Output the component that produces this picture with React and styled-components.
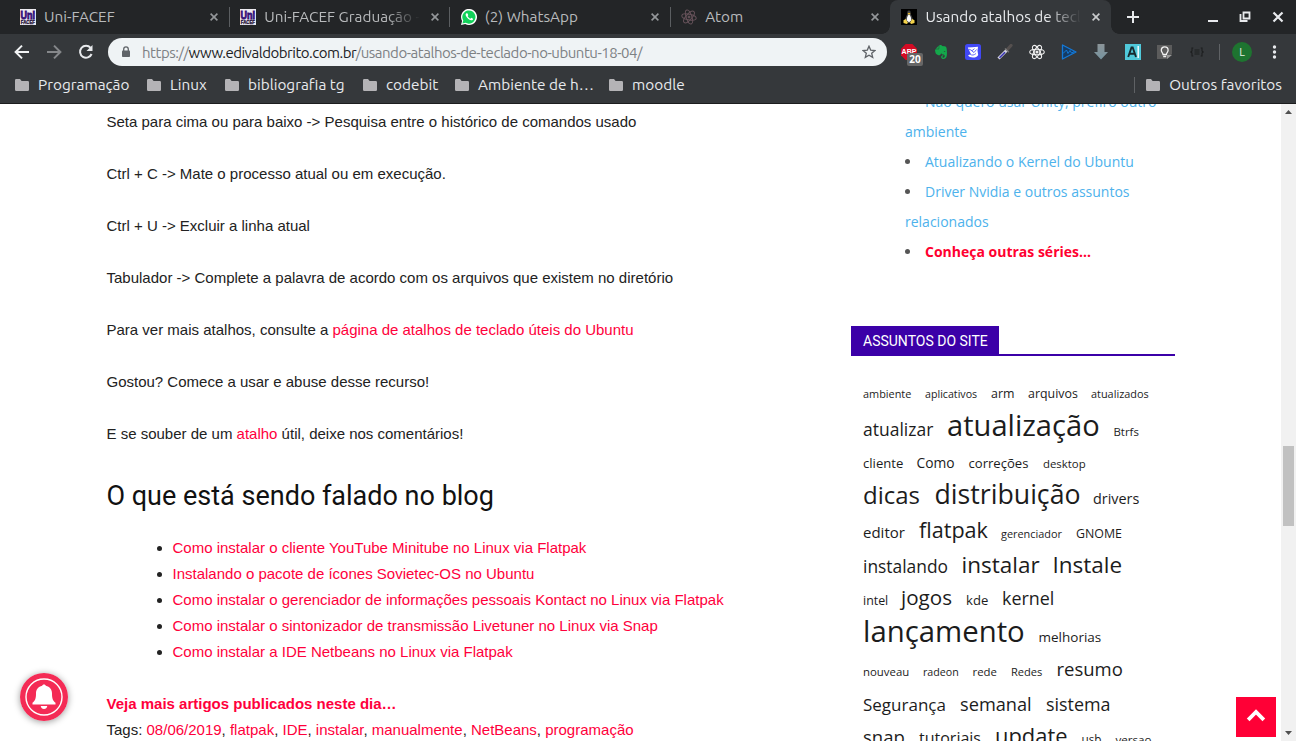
import React from 'react';
import styled, { createGlobalStyle, css } from 'styled-components';
import { FaEvernote } from 'react-icons/fa';

const Global = createGlobalStyle`
  * { box-sizing: border-box; }
  body { margin: 0; overflow: hidden; background: #fff; }
`;

const Screen = styled.div`
  display: flex;
  flex-direction: column;
  width: 1296px;
  height: 741px;
  overflow: hidden;
`;

/* ---------- browser frame ---------- */

const Frame = styled.header`
  flex: none;
  height: 104px;
  background: #35383b;
  border-bottom: 1px solid #1c1d1e;
  color: #e8eaed;
  font-family: Ubuntu, "Open Sans", "Noto Sans", sans-serif;
  font-size: 15.33px;
`;

const TabStrip = styled.div`
  display: flex;
  height: 34px;
  padding-left: 9px;
  background: #232527;
`;

const Tab = styled.div`
  position: relative;
  display: flex;
  align-items: center;
  width: 220.5px;
  height: 34px;
  padding: 0 11px;
  color: #b8babc;
  ${p => p.$divided && css`
    &::after {
      content: '';
      position: absolute;
      right: -0.5px;
      top: 7px;
      width: 1px;
      height: 20px;
      background: #5b5e61;
    }
  `}
  ${p => p.$active && css`
    background: #35383b;
    border-radius: 8px 8px 0 0;
    color: #e8eaed;
    &::before, &::after {
      content: '';
      position: absolute;
      bottom: 0;
      width: 8px;
      height: 8px;
    }
    &::before { left: -8px; background: radial-gradient(circle at 0 0, transparent 7.5px, #35383b 8px); }
    &::after { right: -8px; background: radial-gradient(circle at 100% 0, transparent 7.5px, #35383b 8px); }
  `}
`;

const Favicon = styled.span`
  display: flex;
  flex: none;
  width: 16px;
  height: 16px;
  margin-right: 8px;
`;

const TabTitle = styled.span`
  flex: 1;
  overflow: hidden;
  white-space: nowrap;
  line-height: 20px;
  mask-image: ${p => (p.$fade ? 'linear-gradient(90deg, #000 78%, transparent 100%)' : 'none')};
`;

const CloseButton = styled.span`
  display: flex;
  flex: none;
  margin-left: 11px;
`;

const WindowButtons = styled.div`
  display: flex;
  flex: 1;
  align-items: center;
  padding-left: 15px;
`;

const Toolbar = styled.div`
  display: flex;
  align-items: center;
  height: 36px;
  padding-left: 14px;
`;

const NavButton = styled.span`
  display: flex;
  width: 16px;
  margin-right: 16px;
`;

const Omnibox = styled.div`
  display: flex;
  align-items: center;
  width: 779px;
  height: 28px;
  margin-left: -2px;
  padding: 0 11px 0 13px;
  border-radius: 14px;
  background: #eff3f5;
  color: #7d8184;
`;

const Address = styled.span`
  flex: 1;
  margin-left: 11px;
  font-size: 15px;
  white-space: nowrap;
  letter-spacing: -0.475px;
  b { font-weight: 400; color: #202124; }
`;

const Extensions = styled.div`
  display: flex;
  align-items: center;
  gap: 16px;
  margin-left: 14px;
`;

const Extension = styled.span`
  position: relative;
  display: flex;
  width: 16px;
  height: 16px;
`;

const BadgeCount = styled.span`
  position: absolute;
  left: 6px;
  top: 9px;
  width: 16px;
  height: 13px;
  border-radius: 2px;
  background: #666;
  color: #fff;
  font: 700 10px/13px "Open Sans", sans-serif;
  text-align: center;
`;

const Divider = styled.span`
  width: 1px;
  height: 16px;
  background: #5f6265;
`;

const ToolbarDivider = styled(Divider)`
  margin-left: 14px;
`;

const Avatar = styled.span`
  width: 20px;
  height: 20px;
  margin-left: 12px;
  border-radius: 50%;
  background: #1e7430;
  color: #e6efe7;
  font-size: 11px;
  line-height: 20px;
  text-align: center;
`;

const Bookmarks = styled.div`
  display: flex;
  align-items: center;
  height: 33px;
  padding: 0 14px 3px 15px;
`;

const Bookmark = styled.span`
  display: flex;
  align-items: center;
  width: ${p => (p.$width ? `${p.$width}px` : 'auto')};
  line-height: 18px;
  white-space: nowrap;
  svg { flex: none; margin-right: 9px; }
`;

const BookmarksEnd = styled.div`
  display: flex;
  align-items: center;
  gap: 11px;
  margin-left: auto;
`;

/* ---------- page ---------- */

const Viewport = styled.div`
  position: relative;
  display: flex;
  flex: 1;
  min-height: 0;
  overflow: hidden;
`;

const Article = styled.main`
  flex: none;
  width: 851px;
  padding: 5px 0 0 106.5px;
  color: #222;
  font: 15px/26px "Liberation Sans", Arial, sans-serif;
`;

const Paragraph = styled.p`
  margin: 0 0 26px;
  white-space: nowrap;
`;

const Link = styled.a`
  color: #ff003c;
`;

const BoldLink = styled(Link)`
  font-weight: 700;
`;

const Heading = styled.h3`
  margin: 31px 0 21px;
  color: #111;
  font: 400 27px/36px Roboto, sans-serif;
`;

const RelatedList = styled.ul`
  margin: 0 0 26px;
  padding-left: 66px;
  white-space: nowrap;
`;

const Sidebar = styled.aside`
  width: 324px;
  font-family: "Open Sans", sans-serif;
`;

const SeriesList = styled.ul`
  width: 270px;
  height: 222px;
  margin: -17px 0 0 54px;
  padding: 0;
  list-style: none;
  color: #555;
  font-size: 14px;
  line-height: 30px;
`;

const SeriesItem = styled.li`
  &::before {
    content: '';
    display: inline-block;
    width: 5px;
    height: 5px;
    margin-right: 15px;
    border-radius: 50%;
    background: #555;
    vertical-align: 3px;
  }
`;

const SeriesLink = styled.a`
  color: ${p => (p.$hot ? '#ff0030' : '#4db2ec')};
  font-weight: ${p => (p.$hot ? 700 : 400)};
`;

const WidgetTitle = styled.div`
  display: flex;
  height: 30px;
  margin-top: 17px;
  border-bottom: 2px solid #3b00a8;
`;

const WidgetLabel = styled.span`
  width: 148px;
  height: 30px;
  padding-left: 12px;
  background: #3b00a8;
  color: #fff;
  font: 14px/30px Roboto, sans-serif;
  white-space: nowrap;
`;

const TagCloud = styled.div`
  padding: 15px 0 0 12px;
  color: #1c1c1c;
`;

/* The empty strut sets where the shared text baseline of a row falls. */
const TagRow = styled.div`
  display: flex;
  align-items: baseline;
  &::before { content: ''; width: 0; height: ${p => p.$drop}px; }
`;

const Tag = styled.a`
  flex: none;
  width: ${p => p.$width}px;
  font-size: ${p => p.$size}px;
  line-height: 0;
  white-space: nowrap;
`;

const Scrollbar = styled.div`
  display: flex;
  flex-direction: column;
  justify-content: space-between;
  align-items: center;
  width: 15px;
  margin-left: auto;
  padding: 6px 0;
  background: #f1f1f1;
`;

const ScrollThumb = styled.div`
  position: absolute;
  right: 2px;
  top: 342px;
  width: 11px;
  height: 80px;
  background: #c1c1c1;
`;

const NotifyButton = styled.div`
  position: absolute;
  left: 20px;
  bottom: 20px;
  display: flex;
  width: 48px;
  height: 48px;
  border-radius: 50%;
  box-shadow: 0 1px 7px rgba(0, 0, 0, 0.4);
`;

const ToTopButton = styled.div`
  position: absolute;
  right: 20px;
  bottom: 4px;
  display: flex;
  align-items: center;
  justify-content: center;
  width: 40px;
  height: 40px;
  padding-bottom: 4px;
  background: #ff0036;
`;

/* ---------- icons ---------- */

const Cross = ({ color = '#94979a' }) => (
  <svg width="8" height="8" viewBox="0 0 8 8">
    <path d="M.6.6 7.4 7.4M7.4.6.6 7.4" stroke={color} strokeWidth="1.6" fill="none" />
  </svg>
);

const UniLogo = () => (
  <svg width="16" height="16" viewBox="0 0 16 16">
    <rect width="16" height="16" fill="#eceaf0" />
    <text x="0.6" y="9.8" fontFamily="Liberation Sans" fontWeight="700" fontSize="10.5" textLength="14.5" lengthAdjust="spacingAndGlyphs" fill="#351078" stroke="#351078" strokeWidth=".8">Uni</text>
    <text x="0.8" y="14.6" fontFamily="Liberation Sans" fontWeight="700" fontSize="5" textLength="14.2" lengthAdjust="spacingAndGlyphs" fill="#241038" stroke="#241038" strokeWidth=".3">FACEF</text>
  </svg>
);

const WhatsLogo = () => (
  <svg width="16" height="16" viewBox="0 0 16 16">
    <path d="M0 16 1.1 12A8 8 0 1 1 4.2 15Z" fill="#fff" />
    <path d="M1.4 14.6 2.3 11.6A6.6 6.6 0 1 1 4.6 13.8Z" fill="#12d15a" />
    <path d="M5.3 4.3c-1 .8-.9 2 .5 4s3.200 3 4.500 3 2-1 1.700-1.600l-1.700-.9-.9.9C8 9.200 7 8 6.600 7l.7-.8-.7-1.700z" fill="#fff" />
  </svg>
);

const Orbits = ({ color, width }) => (
  <svg width="16" height="16" viewBox="0 0 16 16" fill="none" stroke={color} strokeWidth={width}>
    <ellipse cx="8" cy="8" rx="7.3" ry="2.800" transform={`rotate(${width > 1 ? 0 : 12} 8 8)`} />
    <ellipse cx="8" cy="8" rx="7.3" ry="2.800" transform={`rotate(${width > 1 ? 60 : 72} 8 8)`} />
    <ellipse cx="8" cy="8" rx="7.3" ry="2.800" transform={`rotate(${width > 1 ? 120 : 132} 8 8)`} />
    <circle cx="8" cy="8" r="1" fill={color} />
  </svg>
);

const TuxLogo = () => (
  <svg width="16" height="16" viewBox="0 0 16 16">
    <rect width="16" height="16" fill="#000" />
    <path d="M8 1.500c-1.800 0-1.700 1.500-1.700 3 0 1.800-2 3.500-2.200 6.500L6 14h4l2-3c-.2-3-2.300-4.700-2.300-6.500 0-1.500 0-3-1.700-3z" fill="#444" />
    <path d="M8 5.200c-1.500 1-2.400 4.300-2.200 6.300L8 13.200l2.200-1.700c.2-2-.7-5.300-2.200-6.300z" fill="#fff" />
    <path d="m6.600 4.600 1.400-.8 1.500.8L8 5.800z" fill="#f5c52b" />
    <path d="m2.500 11.300 2.300-1.300 2.200 4-1.400.9-3.100-1zM13.500 11.300l-2.300-1.300L9 14l1.400.9 3.100-1z" fill="#f2d14a" />
  </svg>
);

const Arrow = ({ flip, color }) => (
  <svg width="16" height="16" viewBox="0 0 16 16" transform={flip ? 'scale(-1 1)' : undefined}>
    <path d="M15 8H2.200M8 1.600 1.600 8 8 14.400" stroke={color} strokeWidth="2" fill="none" />
  </svg>
);

const Reload = () => (
  <svg width="16" height="16" viewBox="0 0 16 16">
    <path d="M13.600 10A6 6 0 1 1 12.600 3.800" stroke="#e8eaed" strokeWidth="2" fill="none" />
    <path d="M14.500 1v6h-6z" fill="#e8eaed" />
  </svg>
);

const Lock = () => (
  <svg width="10" height="12" viewBox="0 0 10 12">
    <rect x="1" y="4.500" width="8" height="6.500" rx=".8" fill="#5f6368" />
    <path d="M2.700 5V3.200a2.300 2.300 0 0 1 4.600 0V5" stroke="#5f6368" strokeWidth="1.300" fill="none" />
  </svg>
);

const Star = () => (
  <svg width="14" height="14" viewBox="0 0 14 14">
    <path d="m7 1.200 1.700 3.900 4.200.4-3.200 2.800 1 4.100L7 10.200l-3.700 2.200 1-4.100L1.100 5.500l4.200-.4z" stroke="#5f6368" strokeWidth="1.300" fill="none" />
  </svg>
);

const Folder = () => (
  <svg width="14" height="12" viewBox="0 0 14 12">
    <path d="M0 1.200Q0 0 1.200 0H5l1.600 2h6.200Q14 2 14 3.200v7.600q0 1.200-1.200 1.200H1.200Q0 12 0 10.800z" fill="#b4b3b6" />
  </svg>
);

const AdblockIcon = () => (
  <svg width="16" height="16" viewBox="0 0 16 16">
    <path d="M4.700 0h6.600L16 4.700v6.600L11.300 16H4.700L0 11.300V4.700z" fill="#d40b24" />
    <text x="0.6" y="10.400" fontFamily="Liberation Sans" fontWeight="700" fontSize="7.800" textLength="14.800" lengthAdjust="spacingAndGlyphs" fill="#fff">ABP</text>
  </svg>
);

const PencilBox = () => (
  <svg width="16" height="16" viewBox="0 0 16 16">
    <rect width="16" height="16" rx="2.500" fill="#4148f5" />
    <path d="M2.800 3.500 7 3.200l6-.5-.5 4 .7 4.300c-1.200 2-2.700 2.500-5.200 2.500-2.300 0-4-.7-5-2l2.800-1.500L4 6z" fill="#fff" />
    <path d="m4 5 3 1.700 2.500-2M6.500 6.700 9 8.500l2.500-3M5 10c2 1.800 4 1.200 6-.5" stroke="#4148f5" strokeWidth=".8" fill="none" />
  </svg>
);

const Dropper = () => (
  <svg width="16" height="16" viewBox="0 0 16 16">
    <path d="M9 7 14 1.500" stroke="#55504f" strokeWidth="3.200" strokeLinecap="round" />
    <path d="M1.500 14.500 10 6" stroke="#d4d4e2" strokeWidth="3" />
    <path d="M2.500 13.800 8 8.300" stroke="#3936b0" strokeWidth="1.600" />
    <path d="m8 4.500 3.800 3.800" stroke="#777" strokeWidth="1.400" />
  </svg>
);

const PlayIcon = () => (
  <svg width="16" height="16" viewBox="0 0 16 16" fill="none" stroke="#1479d8">
    <path d="M1.500 1 15 8 1.500 15z" fill="#153b63" strokeWidth="1.300" strokeLinejoin="round" />
    <path d="M2 9.500 5.500 6l1.500 3.500L9 6.500 10.500 9 13 7.700" strokeWidth="1" />
  </svg>
);

const DownIcon = () => (
  <svg width="16" height="16" viewBox="0 0 16 16">
    <defs><linearGradient id="down" x2="0" y2="1"><stop stopColor="#8b9498" /><stop offset="1" stopColor="#7794a0" /></linearGradient></defs>
    <path d="M4.500 0h7v8H15l-7 7.500L1 8h3.500z" fill="url(#down)" />
  </svg>
);

const CursorA = () => (
  <svg width="16" height="16" viewBox="0 0 16 16">
    <rect width="16" height="16" fill="#50c9da" />
    <path d="M3.200 13 6.500 3.500h1.200L11 13M4.700 9.800h5" stroke="#172a2f" strokeWidth="1.900" fill="none" />
    <path d="M13.200 2v12" stroke="#fff" strokeWidth="1.400" />
  </svg>
);

const Bulb = () => (
  <svg width="16" height="16" viewBox="0 0 16 16">
    <path d="M0 1h15v9l-5 5H0z" fill="#5c5c5c" />
    <path d="M10 15v-4h5z" fill="#9a9a9a" />
    <path d="M6 10.500C6 9 4.300 8.300 4.300 6.300a3.400 3.400 0 0 1 6.800 0c0 2-1.700 2.700-1.700 4.200zM6.200 12.500h3" stroke="#f2f2f2" strokeWidth="1.300" fill="none" />
  </svg>
);

const Braces = () => (
  <svg width="16" height="16" viewBox="0 0 16 16" fill="none" stroke="#1c1e1f" strokeWidth="1.1">
    <path d="M4.300 4H3v3L1.800 8 3 9v3h1.300M11.700 4H13v3l1.200 1L13 9v3h-1.300M5.500 6h5M5.500 8h5M5.500 10h5" />
  </svg>
);

const Triangle = ({ down }) => (
  <svg width="7" height="4" viewBox="0 0 7 4">
    <path d={down ? 'M0 0h7L3.500 4z' : 'M0 4h7L3.500 0z'} fill="#505050" />
  </svg>
);

const Bell = () => (
  <svg width="48" height="48" viewBox="0 0 48 48">
    <circle cx="24" cy="24" r="24" fill="#f42b55" />
    <circle cx="24" cy="24" r="18" stroke="#fff" strokeWidth="1.400" fill="none" />
    <path d="M24 11.500c1 0 1.700.7 1.800 1.300 4 .8 6.200 3.700 6.200 7.700 0 5 .8 7 3.500 9.200V31.500h-23v-1.800c2.700-2.200 3.500-4.200 3.500-9.200 0-4 2.200-6.900 6.200-7.700.1-.6.8-1.300 1.800-1.300zM20.700 33h6.600c-.3 1.900-1.600 3-3.300 3s-3-1.100-3.300-3z" fill="#fff" />
  </svg>
);

/* ---------- content ---------- */

const tabs = [
  { icon: <UniLogo />, title: 'Uni-FACEF', divided: true },
  { icon: <UniLogo />, title: 'Uni-FACEF Graduação - Pós', fade: true, divided: true },
  { icon: <WhatsLogo />, title: '(2) WhatsApp', divided: true },
  { icon: <Orbits color="#66525a" width={1} />, title: 'Atom' },
  { icon: <TuxLogo />, title: 'Usando atalhos de teclado', fade: true, active: true },
];

const bookmarks = [
  ['Programação', 132], ['Linux', 78], ['bibliografia tg', 138],
  ['codebit', 92], ['Ambiente de h…', 154], ['moodle', 90],
];

const related = [
  'Como instalar o cliente YouTube Minitube no Linux via Flatpak',
  'Instalando o pacote de ícones Sovietec-OS no Ubuntu',
  'Como instalar o gerenciador de informações pessoais Kontact no Linux via Flatpak',
  'Como instalar o sintonizador de transmissão Livetuner no Linux via Snap',
  'Como instalar a IDE Netbeans no Linux via Flatpak',
];

const articleTags = ['08/06/2019', 'flatpak', 'IDE', 'instalar', 'manualmente', 'NetBeans', 'programação'];

/* drop to the next baseline, then [name, font size, advance] */
const tagRows = [
  [27, ['ambiente', 10.9, 62], ['aplicativos', 10.67, 66], ['arm', 12.4, 37], ['arquivos', 12.4, 63], ['atualizados', 10.9, 60]],
  [38, ['atualizar', 17.5, 84], ['atualização', 29.1, 166.5], ['Btrfs', 11.4, 30]],
  [32, ['cliente', 13.1, 53.5], ['Como', 13.8, 52], ['correções', 13.1, 74.5], ['desktop', 11.4, 44]],
  [36, ['dicas', 24, 71.5], ['distribuição', 26.7, 158.5], ['drivers', 14.4, 50]],
  [34, ['editor', 15, 56], ['flatpak', 21.6, 82], ['gerenciador', 10.9, 75], ['GNOME', 12.4, 50]],
  [35, ['instalando', 17.4, 98.5], ['instalar', 22.5, 91], ['Instale', 22.5, 74]],
  [32, ['intel', 12.4, 38], ['jogos', 20.6, 65], ['kde', 13.1, 36], ['kernel', 17.9, 54]],
  [37, ['lançamento', 29.33, 175.5], ['melhorias', 13.5, 66]],
  [34, ['nouveau', 11.4, 60], ['radeon', 10.67, 49.5], ['rede', 11.4, 38.5], ['Redes', 11.1, 45.5], ['resumo', 18.5, 70]],
  [35, ['Segurança', 17, 97], ['semanal', 18.2, 86], ['sistema', 17.9, 70]],
  [33, ['snap', 18.5, 56], ['tutoriais', 16, 76], ['update', 21.9, 86.5], ['usb', 11.8, 34], ['versao', 11.6, 40]],
];

export default function App() {
  return (
    <Screen>
      <Global />
      <Frame>
        <TabStrip>
          {tabs.map((t, i) => (
            <Tab key={i} $active={t.active} $divided={t.divided}>
              <Favicon>{t.icon}</Favicon>
              <TabTitle $fade={t.fade}>{t.title}</TabTitle>
              <CloseButton><Cross color={t.active ? '#c9cbcd' : undefined} /></CloseButton>
            </Tab>
          ))}
          <WindowButtons>
            <svg width="170" height="34" viewBox="0 0 170 34" fill="none" stroke="#e8eaed">
              <path d="M1 17h12M7 11v12" strokeWidth="2" />
              <path d="M82 21h10" strokeWidth="2" />
              <path d="M117.500 12.500h6v6h-6z" strokeWidth="1.800" />
              <path d="M114.500 14v7h7" strokeWidth="1.800" />
              <path d="m147.500 12.500 9 9M156.500 12.500l-9 9" strokeWidth="2.200" />
            </svg>
          </WindowButtons>
        </TabStrip>

        <Toolbar>
          <NavButton><Arrow color="#f1f3f4" /></NavButton>
          <NavButton><Arrow flip color="#85878a" /></NavButton>
          <NavButton><Reload /></NavButton>
          <Omnibox>
            <Lock />
            <Address>https://<b>www.edivaldobrito.com.br</b>/usando-atalhos-de-teclado-no-ubuntu-18-04/</Address>
            <Star />
          </Omnibox>
          <Extensions>
            <Extension><AdblockIcon /><BadgeCount>20</BadgeCount></Extension>
            <Extension><FaEvernote size={16} color="#14a84b" /></Extension>
            <Extension><PencilBox /></Extension>
            <Extension><Dropper /></Extension>
            <Extension><Orbits color="#f0f0f0" width={1.1} /></Extension>
            <Extension><PlayIcon /></Extension>
            <Extension><DownIcon /></Extension>
            <Extension><CursorA /></Extension>
            <Extension><Bulb /></Extension>
            <Extension><Braces /></Extension>
          </Extensions>
          <ToolbarDivider />
          <Avatar>L</Avatar>
          <svg width="44" height="16" viewBox="0 0 44 16" fill="#e8eaed">
            <circle cx="22.5" cy="3" r="1.700" /><circle cx="22.5" cy="8" r="1.700" /><circle cx="22.5" cy="13" r="1.700" />
          </svg>
        </Toolbar>

        <Bookmarks>
          {bookmarks.map(([name, width]) => (
            <Bookmark key={name} $width={width}><Folder />{name}</Bookmark>
          ))}
          <BookmarksEnd>
            <Divider />
            <Bookmark><Folder />Outros favoritos</Bookmark>
          </BookmarksEnd>
        </Bookmarks>
      </Frame>

      <Viewport>
        <Article>
          <Paragraph>Seta para cima ou para baixo -&gt; Pesquisa entre o histórico de comandos usado</Paragraph>
          <Paragraph>Ctrl + C -&gt; Mate o processo atual ou em execução.</Paragraph>
          <Paragraph>Ctrl + U -&gt; Excluir a linha atual</Paragraph>
          <Paragraph>Tabulador -&gt; Complete a palavra de acordo com os arquivos que existem no diretório</Paragraph>
          <Paragraph>Para ver mais atalhos, consulte a <Link>página de atalhos de teclado úteis do Ubuntu</Link></Paragraph>
          <Paragraph>Gostou? Comece a usar e abuse desse recurso!</Paragraph>
          <Paragraph>E se souber de um <Link>atalho</Link> útil, deixe nos comentários!</Paragraph>
          <Heading>O que está sendo falado no blog</Heading>
          <RelatedList>
            {related.map(r => <li key={r}><Link>{r}</Link></li>)}
          </RelatedList>
          <Paragraph>
            <BoldLink>Veja mais artigos publicados neste dia…</BoldLink><br />
            Tags: {articleTags.map((t, i) => <React.Fragment key={t}>{i > 0 && ', '}<Link>{t}</Link></React.Fragment>)}
          </Paragraph>
        </Article>

        <Sidebar>
          <SeriesList>
            <SeriesItem><SeriesLink>Não quero usar Unity, prefiro outro ambiente</SeriesLink></SeriesItem>
            <SeriesItem><SeriesLink>Atualizando o Kernel do Ubuntu</SeriesLink></SeriesItem>
            <SeriesItem><SeriesLink>Driver Nvidia e outros assuntos relacionados</SeriesLink></SeriesItem>
            <SeriesItem><SeriesLink $hot>Conheça outras séries…</SeriesLink></SeriesItem>
          </SeriesList>
          <WidgetTitle><WidgetLabel>ASSUNTOS DO SITE</WidgetLabel></WidgetTitle>
          <TagCloud>
            {tagRows.map(([drop, ...tags]) => (
              <TagRow key={tags[0][0]} $drop={drop}>
                {tags.map(([name, size, width]) => <Tag key={name} $size={size} $width={width}>{name}</Tag>)}
              </TagRow>
            ))}
          </TagCloud>
        </Sidebar>

        <Scrollbar><Triangle /><Triangle down /></Scrollbar>
        <ScrollThumb />
        <NotifyButton><Bell /></NotifyButton>
        <ToTopButton>
          <svg width="20" height="14" viewBox="0 0 20 14"><path d="m3.500 10.500 6.500-6.500 6.500 6.500" stroke="#fff" strokeWidth="3.800" strokeLinecap="square" fill="none" /></svg>
        </ToTopButton>
      </Viewport>
    </Screen>
  );
}
